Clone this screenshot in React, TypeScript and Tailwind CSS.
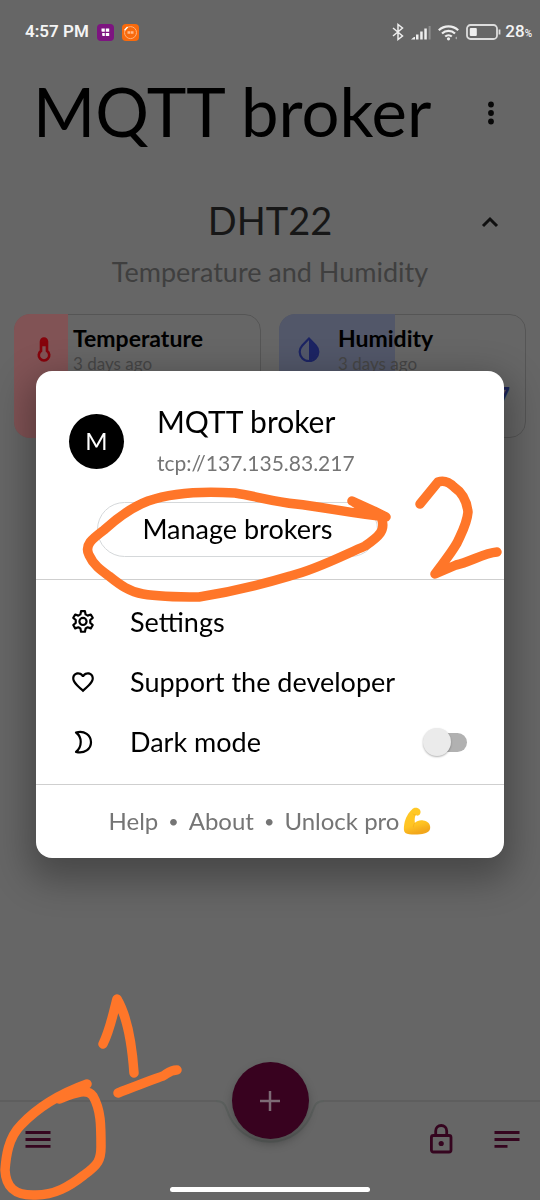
import { useState } from "react";
import type { ReactNode } from "react";

function StatusBar() {
  return (
    <div className="flex h-16 items-center justify-between pr-2 pl-[25px] font-[Roboto,sans-serif] text-[#f4f4f4]">
      <div className="flex items-center gap-2">
        <span className="text-[17px] font-semibold">4:57 PM</span>
        <svg className="size-[17px]" viewBox="0 0 17 17" aria-hidden="true">
          <rect width="17" height="17" rx="4" fill="#7d1480" />
          <path d="M4.500 4.500h3.300v3.300H5.300a.8.8 0 0 1-.8-.8zM8.800 4.500h3.400v3.300H8.800zM5.200 9h2.600v3H6a.8.8 0 0 1-.8-.8zM8.800 9h3.400v3H8.800z" fill="#fff" />
        </svg>
        <svg className="size-[17px]" viewBox="0 0 17 17" aria-hidden="true">
          <rect width="17" height="17" rx="4" fill="#f96a0c" />
          <circle cx="8.500" cy="8.600" r="6" fill="none" stroke="#ffb27a" strokeWidth="1" />
          <path d="M2.600 6.200 5.600 3" stroke="#fff" strokeWidth="1.400" />
          <path d="M5.500 7.200h2.700v2.600H5.500zM8.800 7.200h2.700v2.600H8.800z" fill="#ffb988" />
        </svg>
      </div>
      <div className="flex items-center gap-[7px]">
        <svg className="h-[18px] w-3" viewBox="0 0 12 18" fill="none" stroke="#eee" strokeWidth="1.500" aria-hidden="true">
          <path d="M1 5l9.500 8L6 16.500v-15L10.500 5 1 13" />
        </svg>
        <svg className="h-[15px] w-5" viewBox="0 0 20 15" fill="#eee" aria-hidden="true">
          <path d="M0 14.500l3-2.500h1v2.500zM5 9.500h2.500v5H5zM9.200 6.500h2.500v8H9.200zM13.300 3.500h2.500v11h-2.500z" />
          <path d="M17.600 1h2v13.500h-2z" fill="#8c8c8c" />
        </svg>
        <svg className="h-[17px] w-[21px]" viewBox="0 0 21 17" fill="none" stroke="#eee" strokeWidth="2.200" aria-hidden="true">
          <path d="M.8 6.200a14 14 0 0 1 19.400 0M4 9.500a9.400 9.400 0 0 1 13 0M7.200 12.500a5 5 0 0 1 6.600 0" />
          <circle cx="10.500" cy="14.800" r="1.600" fill="#eee" stroke="none" />
          <path d="M19 12.500v3l-2-1.500z" fill="#aaa" stroke="none" />
        </svg>
        <div className="flex items-center gap-1">
          <svg className="h-4 w-[35px]" viewBox="0 0 35 16" fill="none" aria-hidden="true">
            <rect x="1" y="1" width="30" height="14" rx="3.500" stroke="#ddd" strokeWidth="1.800" />
            <rect x="3.800" y="4" width="7" height="8" rx="1" fill="#eee" />
            <path d="M33.500 5.500v5" stroke="#ddd" strokeWidth="1.800" />
          </svg>
          <span className="text-[17px] font-medium">
            28<span className="text-[10px]">%</span>
          </span>
        </div>
      </div>
    </div>
  );
}

function SensorCard({ name, icon, fill, value }: { name: string; icon: ReactNode; fill: string; value?: string }) {
  return (
    <article className="relative h-[124px] overflow-hidden rounded-2xl">
      <div className="absolute inset-0 rounded-2xl border border-[#555555]" />
      <div className={`absolute inset-y-0 left-0 ${fill}`} />
      <div className="relative flex items-start pt-2.5">
        <div className="flex w-[59px] justify-center pt-3">{icon}</div>
        <div>
          <h3 className="text-[23px] leading-7 font-bold text-black">{name}</h3>
          <p className="text-[17px] leading-6 text-[#464646]">3 days ago</p>
        </div>
      </div>
      {value && <p className="relative mt-1.5 pr-4 text-right text-2xl leading-7 font-bold text-[#1c2458]">{value}</p>}
    </article>
  );
}

function MenuRow({ icon, label }: { icon: ReactNode; label: string }) {
  return (
    <button type="button" className="flex h-[60px] w-full items-center gap-[34px] px-[34px] text-left text-[27px]">
      {icon}
      {label}
    </button>
  );
}

function BrokerDialog() {
  const [dark, setDark] = useState(false);
  return (
    <div className="fixed inset-0 z-10 flex items-center justify-center px-9 pt-[29px]">
      <section role="dialog" aria-label="MQTT broker" className="w-full max-w-xl rounded-2xl bg-white text-black shadow-[0_14px_36px_8px_rgba(0,0,0,0.3)]">
        <header className="border-b border-[#cfcfcf] pt-[34px] pb-[22px]">
          <div className="flex items-center gap-[33px] pl-[33px]">
            <div className="flex size-[55px] items-center justify-center rounded-full bg-black text-2xl text-white">M</div>
            <div>
              <h2 className="text-[30px] leading-8">MQTT broker</h2>
              <p className="mt-3 text-[21px] leading-7 text-[#757575]">tcp://137.135.83.217</p>
            </div>
          </div>
          <button type="button" className="mt-[25px] ml-[61px] flex h-[55px] w-3/5 items-center justify-center rounded-full border border-[#d5d8da] text-[27px]">
            Manage brokers
          </button>
        </header>
        <nav className="py-3">
          <MenuRow
            label="Settings"
            icon={
              <svg className="size-[26px]" viewBox="0 0 24 24" fill="none" stroke="currentColor" strokeWidth="2" strokeLinejoin="round" aria-hidden="true">
                <path d="M10.200 2h3.600l.6 3 1.900 1.100 2.900-1 1.800 3.100-2.300 2v2.600l2.300 2-1.800 3.100-2.900-1-1.900 1.100-.6 3h-3.600l-.6-3-1.900-1.100-2.900 1L3 14.800l2.300-2v-2.600l-2.300-2 1.800-3.100 2.900 1L9.600 5z" />
                <circle cx="12" cy="11.500" r="3.300" />
              </svg>
            }
          />
          <MenuRow
            label="Support the developer"
            icon={
              <svg className="size-[26px]" viewBox="0 0 24 24" fill="currentColor" aria-hidden="true">
                <path d="M16.500 3c-1.740 0-3.410.81-4.500 2.090C10.910 3.810 9.240 3 7.500 3 4.420 3 2 5.420 2 8.500c0 3.780 3.400 6.860 8.550 11.540L12 21.350l1.450-1.320C18.600 15.360 22 12.280 22 8.500 22 5.420 19.580 3 16.500 3zm-4.400 15.550-.1.100-.1-.1C7.140 14.240 4 11.390 4 8.500 4 6.500 5.500 5 7.500 5c1.540 0 3.040.99 3.570 2.360h1.870C13.460 5.990 14.960 5 16.500 5c2 0 3.500 1.500 3.500 3.500 0 2.890-3.140 5.740-7.900 10.050z" />
              </svg>
            }
          />
          <div className="flex h-[60px] items-center gap-[34px] pr-[37px] pl-[34px] text-[27px]">
            <svg className="size-[26px]" viewBox="0 0 26 26" fill="none" stroke="currentColor" strokeWidth="2.200" strokeLinejoin="round" aria-hidden="true">
              <path d="M6 3.500C14.500 1 21 6.500 21 13.300S14.500 25 6 22.900C12.300 18 12.300 8 6 3.500z" />
            </svg>
            <label htmlFor="dark-mode" className="flex-1">Dark mode</label>
            <span className="relative flex h-[30px] w-11 items-center">
              <input
                id="dark-mode"
                type="checkbox"
                role="switch"
                checked={dark}
                onChange={(e) => setDark(e.target.checked)}
                className="peer ml-auto h-[19px] w-9 appearance-none rounded-full bg-[#b1b1b1]"
              />
              <span className="pointer-events-none absolute left-0 size-7 rounded-full bg-[#ebebeb] shadow-[0_1px_2px_rgba(0,0,0,0.3)] peer-checked:left-4" />
            </span>
          </div>
        </nav>
        <footer className="flex h-[74px] items-center justify-center gap-2.5 border-t border-[#cfcfcf] pb-0.5 text-2xl text-[#757575]">
          <a href="#help">Help</a>
          <span className="text-lg">•</span>
          <a href="#about">About</a>
          <span className="text-lg">•</span>
          <a href="#pro" className="flex items-center gap-1">
            Unlock pro
            <svg className="size-7" viewBox="0 0 28 28" role="img" aria-label="Flexed biceps">
              <defs>
                <linearGradient id="skin" x1="0" y1="0" x2="0.300" y2="1">
                  <stop offset="0" stopColor="#ffca28" />
                  <stop offset="0.700" stopColor="#ffc423" />
                  <stop offset="1" stopColor="#f2a71b" />
                </linearGradient>
              </defs>
              <path d="M9 2.500C10 .8 12.500.3 14.500 1c2 .8 3.500 2.500 3 4.800-.3 1.500-1.300 2.500-2.800 3L12.500 8c-.8 2.500-1 5-.6 8 2-2 5-3 8.300-2.500 4.200.5 7.200 3.300 7 7.200-.2 4-4 6-10 6.500-6 .6-12 .3-14.800-1.200C.5 24.500.6 21 1.300 17 2.300 11 5.500 5.500 9 2.500z" fill="url(#skin)" />
              <path d="M11.900 16c-1.200 1.300-1.600 2.500-1.500 4M12.500 8c-1 .2-1.800-.2-2.200-.9M19 21c2 1.500 4.500 1 5.500-.5" fill="none" stroke="#f5ae20" strokeWidth="0.800" strokeLinecap="round" />
            </svg>
          </a>
        </footer>
      </section>
    </div>
  );
}

function BottomBar() {
  return (
    <footer className="relative mt-auto h-[99px] text-[#35051f]">
      <div className="absolute inset-x-0 -top-px flex">
        <div className="h-[3px] flex-1 border-t-2 border-[#5e5e5e]" />
        <svg className="h-12 w-[108px]" viewBox="0 0 108 48" fill="none" aria-hidden="true">
          <path d="M0 1c7 0 9 3 11 9a45 45 0 0 0 86 0c2-6 4-9 11-9" stroke="#5b5f5d" strokeWidth="2" />
        </svg>
        <div className="h-[3px] flex-1 border-t-2 border-[#5e5e5e]" />
      </div>
      <button type="button" aria-label="Add" className="absolute inset-x-0 -top-[39px] mx-auto flex size-[77px] items-center justify-center rounded-full bg-[#38021f] shadow-[0_5px_10px_rgba(0,0,0,0.25)]">
        <svg className="size-5" viewBox="0 0 20 20" stroke="#7d6a75" strokeWidth="2.500" aria-hidden="true">
          <path d="M10 0v20M0 10h20" />
        </svg>
      </button>
      <div className="flex items-center justify-between pr-[19px] pl-5 pt-[22px]">
        <button type="button" aria-label="Menu" className="flex h-8 items-center px-1">
          <svg className="h-[18px] w-7" viewBox="0 0 28 18" stroke="currentColor" strokeWidth="2.800" aria-hidden="true">
            <path d="M1.500 2.500h25M1.500 9.500h25M1.500 16.400h25" />
          </svg>
        </button>
        <div className="flex items-center gap-10">
          <button type="button" aria-label="Lock" className="flex h-8 items-center">
            <svg className="h-[30px] w-6" viewBox="0 0 24 30" fill="none" stroke="currentColor" strokeWidth="2.800" aria-hidden="true">
              <rect x="2.400" y="11.500" width="19.600" height="16.500" rx="2" />
              <path d="M6.700 11.500V7a5.500 5.500 0 0 1 11 0v4.500" />
              <circle cx="12.200" cy="19.500" r="2.600" fill="currentColor" stroke="none" />
            </svg>
          </button>
          <button type="button" aria-label="Log" className="flex h-8 items-center">
            <svg className="h-[18px] w-7" viewBox="0 0 28 18" stroke="currentColor" strokeWidth="2.800" aria-hidden="true">
              <path d="M1.500 2.500h25M1.500 9.500h25M1.500 16.400h13" />
            </svg>
          </button>
        </div>
      </div>
      <div className="absolute inset-x-0 bottom-2 mx-auto h-[5px] w-[200px] rounded-full bg-white" />
    </footer>
  );
}

function Annotations() {
  return (
    <svg
      className="pointer-events-none absolute top-0 left-1/2 z-20 h-[1200px] w-[540px] -translate-x-1/2"
      viewBox="0 0 540 1200"
      fill="none"
      stroke="#ff7629"
      strokeWidth="9.500"
      strokeLinecap="round"
      strokeLinejoin="round"
      aria-hidden="true"
    >
      <path d="M352 501 374 511 386 517C350 513 322 507 296 504C275 502 255 496 235 493C205 491 174 492 148 501C130 508 116 519 104 530C92 539 84 545 89 555C94 566 102 571 109 576C120 585 130 592 143 594C160 597 180 597 199 597C230 592 260 585 290 576C315 570 340 557 365 546C380 536 385 530 382 520M354 502 372 514" />
      <path d="M420 504 438 482C444 480 449 482 454 487C463 493 467 503 468 512C467 524 462 532 457 543C450 555 443 563 435 574L456 565C470 562 484 553 497 552" />
      <path d="M103 1044C110 1030 113 1014 117 999C127 1016 132 1044 134 1073" />
      <path d="M118 1093C131 1088 151 1080 163 1076C168 1073 170 1070 177 1070" />
      <path d="M87 1084C62 1093 38 1107 21 1125C8 1138 6 1157 5 1170C6 1188 15 1195 33 1195C54 1196 70 1186 84 1175C98 1165 101 1160 101 1147C101 1125 101 1110 93 1096C87 1088 75 1093 59 1099L76 1090" />
    </svg>
  );
}

export default function App() {
  return (
    <main className="relative flex min-h-screen flex-col overflow-hidden bg-[#666666] font-[Lato,sans-serif]">
      <StatusBar />
      <header className="flex h-[98px] items-center justify-between pr-[35px] pl-[33px]">
        <h1 className="pb-1 text-[67px] leading-none text-black">MQTT broker</h1>
        <button type="button" aria-label="More options" className="flex h-10 w-7 items-center justify-center">
          <svg className="h-6 w-1.5" viewBox="0 0 6 24" fill="#080808" aria-hidden="true">
            <circle cx="3" cy="3.500" r="2.900" />
            <circle cx="3" cy="12" r="2.900" />
            <circle cx="3" cy="20.500" r="2.900" />
          </svg>
        </button>
      </header>
      <section className="pt-9">
        <div className="relative flex h-12 items-center justify-center">
          <h2 className="pb-1 text-[38px] leading-none text-[#171717]">DHT22</h2>
          <button type="button" aria-label="Collapse" className="absolute right-9 flex h-10 w-7 items-center justify-center">
            <svg className="h-3 w-[18px]" viewBox="0 0 18 12" fill="none" stroke="#101010" strokeWidth="3" aria-hidden="true">
              <path d="M2 10l7-7 7 7" />
            </svg>
          </button>
        </div>
        <p className="mt-2 text-center text-[27px] leading-9 text-[#3f3f3f]">Temperature and Humidity</p>
        <div className="mt-6 grid grid-cols-2 gap-[18px] px-3.5">
          <SensorCard
            name="Temperature"
            fill="w-[54px] bg-[#815355]"
            icon={
              <svg className="h-[28px] w-4" viewBox="0 0 16 30" fill="none" stroke="#86040c" strokeWidth="2.800" aria-hidden="true">
                <path d="M4.800 16V6a3.200 3.200 0 0 1 6.400 0v10a5.600 5.600 0 1 1-6.400 0z" />
                <path d="M5 4h6v7H5z" fill="#86040c" stroke="none" />
              </svg>
            }
          />
          <SensorCard
            name="Humidity"
            fill="w-[116px] bg-[#525769]"
            value="47"
            icon={
              <svg className="h-[26px] w-[22px]" viewBox="0 0 22 26" aria-hidden="true">
                <path d="M11 2.500 4.300 9.400a9.300 9.300 0 1 0 13.400 0z" fill="none" stroke="#1c2463" strokeWidth="2.200" />
                <path d="M11 2.500v22a9.300 9.300 0 0 0 6.700-15.100z" fill="#1c2463" />
              </svg>
            }
          />
        </div>
      </section>
      <BottomBar />
      <BrokerDialog />
      <Annotations />
    </main>
  );
}
